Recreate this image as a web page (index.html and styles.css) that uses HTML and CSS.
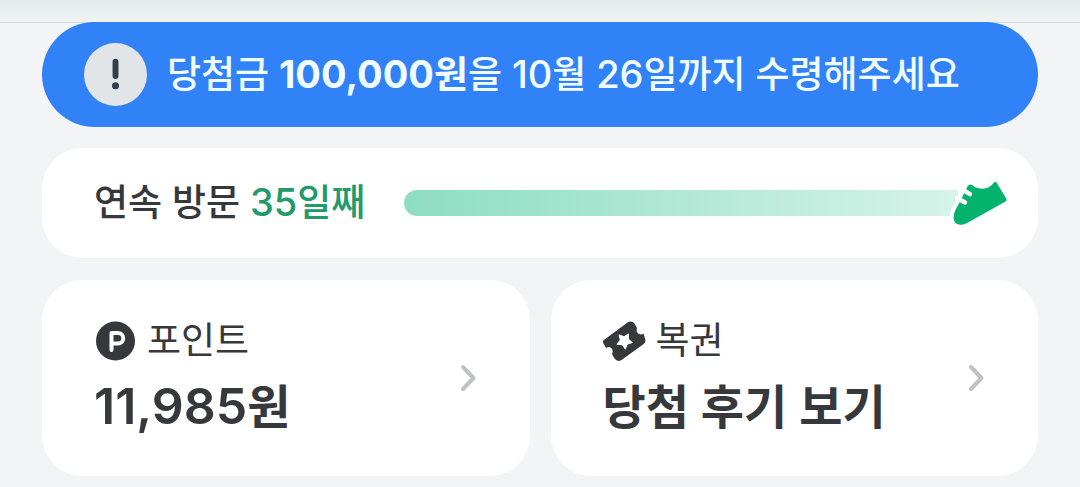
FILE: index.html
```
<!DOCTYPE html>
<html lang="ko">
<head>
<meta charset="utf-8">
<meta name="viewport" content="width=device-width, initial-scale=1">
<title>포인트</title>
<link rel="stylesheet" href="styles.css">
</head>
<body>
<header class="topbar"></header>
<main class="content">
  <a class="banner" href="#">
    <svg class="banner-icon" viewBox="0 0 64 64" aria-hidden="true">
      <circle cx="32" cy="32" r="32" fill="#e1e5e8"/>
      <path d="M32 19v14.500" stroke="#333d4b" stroke-width="6" stroke-linecap="round"/>
      <circle cx="32" cy="43.500" r="3.600" fill="#333d4b"/>
    </svg>
    <span class="banner-text">당첨금 <strong><span class="num">100,000</span>원</strong>을 <span class="num">10</span>월 <span class="num">26</span>일까지 수령해주세요</span>
  </a>
  <section class="card streak">
    <p class="streak-label">연속 방문 <span class="streak-days"><span class="num">35</span>일째</span></p>
    <div class="track">
      <div class="track-fill"></div>
      <svg class="shoe" viewBox="0 0 64 56" aria-hidden="true">
        <path d="M22.500 8.500Q24 5.500 27 7L29.500 9Q42 14 49 4.500Q50 3 51.500 4.500L61.500 21Q62 22.500 60.500 23.500L23 44.500C14 49.500 7 46 9 36.500Q9.500 33 14 25.500Z" fill="#fff" stroke="#fff" stroke-width="8" stroke-linejoin="round"/>
        <path d="M22.500 8.500Q24 5.500 27 7L29.500 9Q42 14 49 4.500Q50 3 51.500 4.500L61.500 21Q62 22.500 60.500 23.500L23 44.500C14 49.500 7 46 9 36.500Q9.500 33 14 25.500Z" fill="#03b26c"/>
        <path d="M17 11.500l8 4.700M12 20l8 4.500" stroke="#fff" stroke-width="4.400" stroke-linecap="round"/>
      </svg>
    </div>
  </section>
  <div class="tiles">
    <a class="card tile" href="#">
      <span class="tile-body">
        <span class="tile-head">
          <svg class="tile-icon" viewBox="0 0 42 42" aria-hidden="true">
            <circle cx="21.500" cy="21" r="19.500" fill="#37383c"/>
            <path d="M17.500 30V13h6.500a5 5 0 0 1 0 10.500H17.500" fill="none" stroke="#fff" stroke-width="4" stroke-linecap="round" stroke-linejoin="round"/>
          </svg>
          <span>포인트</span>
        </span>
        <span class="tile-value"><span class="num">11,985</span>원</span>
      </span>
      <svg class="chevron" viewBox="0 0 18 30" aria-hidden="true"><path d="M3 4L13.500 15 3 26"/></svg>
    </a>
    <a class="card tile" href="#">
      <span class="tile-body">
        <span class="tile-head">
          <svg class="tile-icon" viewBox="0 0 42 42" aria-hidden="true">
            <path d="M1.500 19.500L24.500 2.500Q28.500 0 31.500 3.500L34 8Q32.500 12 36 14Q38.500 15 40.500 13.500L42 18.500Q43.500 22 40 24.500L18.500 40Q14.500 42.500 11.500 38.500L9 34Q11 30 7.500 27.500Q5.500 26.500 3 28L.500 23.500Q-1 21 1.500 19.500Z" fill="#37383c"/>
            <path transform="translate(21.500 21) rotate(-6)" d="M0 8L-2.500 3.400-7.600 2.400-4-1.300-4.700-6.500 0-4.200 4.700-6.500 4-1.300 7.600 2.400 2.500 3.400Z" fill="#fff" stroke="#fff" stroke-width="1" stroke-linejoin="round"/>
          </svg>
          <span>복권</span>
        </span>
        <span class="tile-value">당첨 후기 보기</span>
      </span>
      <svg class="chevron" viewBox="0 0 18 30" aria-hidden="true"><path d="M3 4L13.500 15 3 26"/></svg>
    </a>
  </div>
</main>
</body>
</html>
```
FILE: styles.css
```
* { box-sizing: border-box; }
body {
  margin: 0;
  background: #f2f4f6;
  color: #37383c;
  font-family: Inter, "Noto Sans CJK KR", sans-serif;
}
a { color: inherit; text-decoration: none; }
p { margin: 0; }
.topbar {
  height: 23px;
  background: linear-gradient(#e3ebe9, #eef2f3);
  border-bottom: 1px solid #d3dee1;
}
.content {
  display: grid;
  gap: 21px;
  margin-top: -1px;
  padding: 0 42px 11px;
}
.banner {
  display: flex;
  align-items: center;
  gap: 20px;
  min-height: 105px;
  padding: 20px 42px;
  border-radius: 53px;
  background: #3182f6;
  color: #f0fcff;
  font-size: 37px;
  font-weight: 500;
  line-height: 48px;
}
.num { font-size: 38px; line-height: 1; }
.banner-icon { flex: none; width: 63px; height: 63px; }
.banner-text strong { font-weight: 700; }
.card { border-radius: 40px; background: #fff; }
.streak {
  display: flex;
  align-items: center;
  gap: 39px;
  min-height: 110px;
  padding: 20px 30px 20px 52px;
  font-size: 37px;
  font-weight: 500;
  line-height: 48px;
}
.streak-label { flex: none; }
.streak-days { color: #229a6a; }
.track { position: relative; flex: 1; padding-right: 50px; }
.track-fill {
  height: 26px;
  border-radius: 13px 0 0 13px;
  background: linear-gradient(90deg, #8eddc3, #d6f3e9);
}
.shoe { position: absolute; right: -1px; top: -12px; width: 64px; height: 56px; overflow: visible; }
.tiles { display: grid; grid-template-columns: 1fr 1fr; gap: 21px; margin-top: 1px; }
.tile {
  display: flex;
  align-items: center;
  justify-content: space-between;
  min-height: 196px;
  padding: 30px 52px;
}
.tile-body { display: grid; gap: 6px; padding-bottom: 4px; }
.tile-head {
  display: flex;
  align-items: center;
  gap: 11px;
  font-size: 37px;
  line-height: 56px;
}
.tile-icon { flex: none; width: 42px; height: 42px; overflow: visible; }
.tile-value { font-size: 47px; font-weight: 600; line-height: 64px; }
.tile-value .num { font-size: 50px; }
.chevron { flex: none; width: 18px; height: 30px; }
.chevron path {
  fill: none;
  stroke: #bfc1c3;
  stroke-width: 4;
  stroke-linecap: round;
  stroke-linejoin: round;
}
```
